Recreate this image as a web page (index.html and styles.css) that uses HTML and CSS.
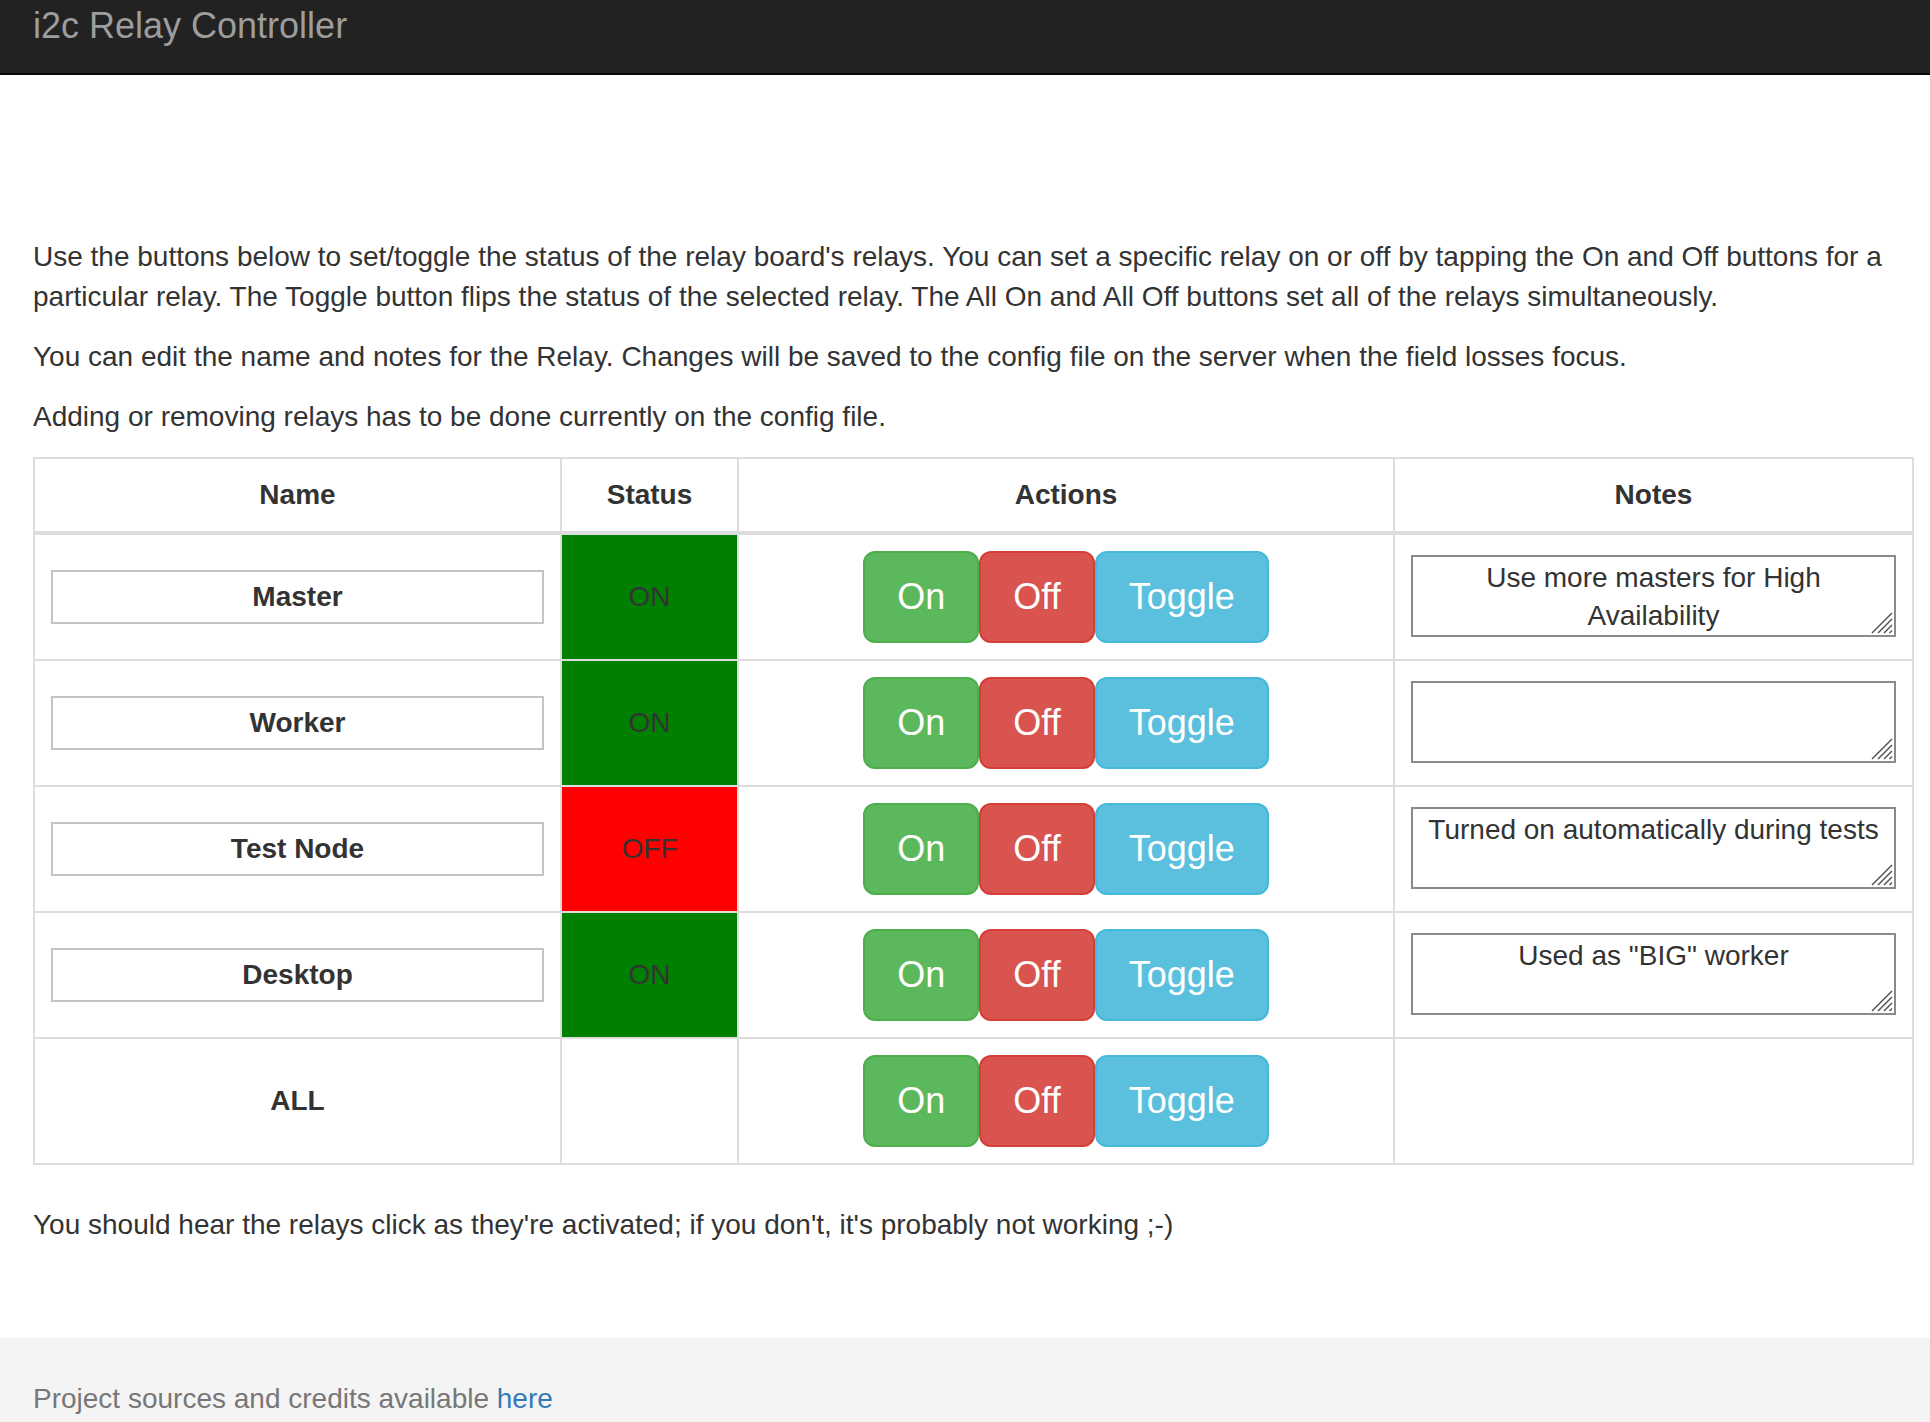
FILE: index.html
```html
<!DOCTYPE html>
<html>
<head>
<meta charset="utf-8">
<title>i2c Relay Controller</title>
<link rel="stylesheet" href="styles.css">
</head>
<body>
<nav class="navbar">
  <span class="brand">i2c Relay Controller</span>
</nav>
<main class="content">
  <p>Use the buttons below to set/toggle the status of the relay board's relays. You can set a specific relay on or off by tapping the On and Off buttons for a particular relay. The Toggle button flips the status of the selected relay. The All On and All Off buttons set all of the relays simultaneously.</p>
  <p>You can edit the name and notes for the Relay. Changes will be saved to the config file on the server when the field losses focus.</p>
  <p>Adding or removing relays has to be done currently on the config file.</p>
  <table class="relays">
    <colgroup>
      <col class="c-name"><col class="c-status"><col class="c-actions"><col class="c-notes">
    </colgroup>
    <thead>
      <tr><th>Name</th><th>Status</th><th>Actions</th><th>Notes</th></tr>
    </thead>
    <tbody>
      <tr>
        <td><input class="name-input" type="text" value="Master"></td>
        <td class="status on">ON</td>
        <td><div class="actions"><button class="btn btn-on">On</button><button class="btn btn-off">Off</button><button class="btn btn-toggle">Toggle</button></div></td>
        <td><div class="notes-wrap"><textarea class="notes">Use more masters for High Availability</textarea><svg class="grip" viewBox="0 0 24 24" width="24" height="24"><path d="M3 23 L23 3 M9 23 L23 9 M15 23 L23 15 M20.5 23 L23 20.5" /></svg></div></td>
      </tr>
      <tr>
        <td><input class="name-input" type="text" value="Worker"></td>
        <td class="status on">ON</td>
        <td><div class="actions"><button class="btn btn-on">On</button><button class="btn btn-off">Off</button><button class="btn btn-toggle">Toggle</button></div></td>
        <td><div class="notes-wrap"><textarea class="notes"></textarea><svg class="grip" viewBox="0 0 24 24" width="24" height="24"><path d="M3 23 L23 3 M9 23 L23 9 M15 23 L23 15 M20.5 23 L23 20.5" /></svg></div></td>
      </tr>
      <tr>
        <td><input class="name-input" type="text" value="Test Node"></td>
        <td class="status off">OFF</td>
        <td><div class="actions"><button class="btn btn-on">On</button><button class="btn btn-off">Off</button><button class="btn btn-toggle">Toggle</button></div></td>
        <td><div class="notes-wrap"><textarea class="notes">Turned on automatically during tests</textarea><svg class="grip" viewBox="0 0 24 24" width="24" height="24"><path d="M3 23 L23 3 M9 23 L23 9 M15 23 L23 15 M20.5 23 L23 20.5" /></svg></div></td>
      </tr>
      <tr>
        <td><input class="name-input" type="text" value="Desktop"></td>
        <td class="status on">ON</td>
        <td><div class="actions"><button class="btn btn-on">On</button><button class="btn btn-off">Off</button><button class="btn btn-toggle">Toggle</button></div></td>
        <td><div class="notes-wrap"><textarea class="notes">Used as "BIG" worker</textarea><svg class="grip" viewBox="0 0 24 24" width="24" height="24"><path d="M3 23 L23 3 M9 23 L23 9 M15 23 L23 15 M20.5 23 L23 20.5" /></svg></div></td>
      </tr>
      <tr>
        <td class="all-label">ALL</td>
        <td></td>
        <td><div class="actions"><button class="btn btn-on">On</button><button class="btn btn-off">Off</button><button class="btn btn-toggle">Toggle</button></div></td>
        <td></td>
      </tr>
    </tbody>
  </table>
  <p>You should hear the relays click as they're activated; if you don't, it's probably not working ;-)</p>
</main>
<footer class="footer">
  <p class="footer-text">Project sources and credits available <a href="#">here</a></p>
</footer>
</body>
</html>
```

FILE: styles.css
```css
* {
  box-sizing: border-box;
}

html, body {
  margin: 0;
  padding: 0;
}

body {
  font-family: "Liberation Sans", Arial, Helvetica, sans-serif;
  font-size: 28px;
  line-height: 40px;
  color: #333;
  background: #fff;
}

.navbar {
  height: 75px;
  background: #222;
  border-bottom: 2px solid #080808;
  padding-left: 33px;
}

.brand {
  display: block;
  font-size: 36px;
  line-height: 40px;
  padding-top: 6px;
  color: #9d9d9d;
}

.content {
  padding: 162px 18px 73px 33px;
}

.content p {
  margin: 0 0 20px;
}

.relays {
  width: 100%;
  table-layout: fixed;
  border-collapse: collapse;
  margin-bottom: 40px;
}

.c-name { width: 527px; }
.c-status { width: 177px; }
.c-actions { width: 656px; }
.c-notes { width: 519px; }

.relays th,
.relays td {
  border: 2px solid #ddd;
  padding: 16px;
  text-align: center;
  vertical-align: middle;
  line-height: 40px;
}

.relays th {
  font-weight: bold;
  border-bottom-width: 4px;
}

.name-input {
  display: block;
  width: 100%;
  height: 54px;
  border: 2px solid #c4c4c4;
  padding: 0 8px;
  font-family: inherit;
  font-size: 28px;
  font-weight: bold;
  color: #333;
  text-align: center;
  background: #fff;
}

.status.on {
  background: #008000;
}

.status.off {
  background: #ff0000;
}

.all-label {
  font-weight: bold;
}

.actions {
  display: flex;
  justify-content: center;
}

.btn {
  font-family: inherit;
  font-size: 36px;
  line-height: 48px;
  padding: 20px 32px;
  border: 2px solid transparent;
  border-radius: 12px;
  color: #fff;
  cursor: pointer;
}

.btn-on {
  background: #5cb85c;
  border-color: #4cae4c;
}

.btn-off {
  background: #d9534f;
  border-color: #d43f3a;
}

.btn-toggle {
  background: #5bc0de;
  border-color: #46b8da;
}

.notes-wrap {
  position: relative;
}

.notes {
  display: block;
  width: 100%;
  height: 82px;
  margin-top: -3px;
  border: 2px solid #8a8a8a;
  padding: 2px 10px;
  font-family: inherit;
  font-size: 28px;
  line-height: 38px;
  color: #333;
  text-align: center;
  overflow: hidden;
  resize: none;
  background: #fff;
}

.grip {
  position: absolute;
  right: 3px;
  bottom: 3px;
  fill: none;
  stroke: #555;
  stroke-width: 1.5;
}

.footer {
  background: #f4f4f4;
  padding: 41px 33px 41px;
}

.footer-text {
  margin: 0;
  color: #777;
}

.footer-text a {
  color: #337ab7;
  text-decoration: none;
}
```
